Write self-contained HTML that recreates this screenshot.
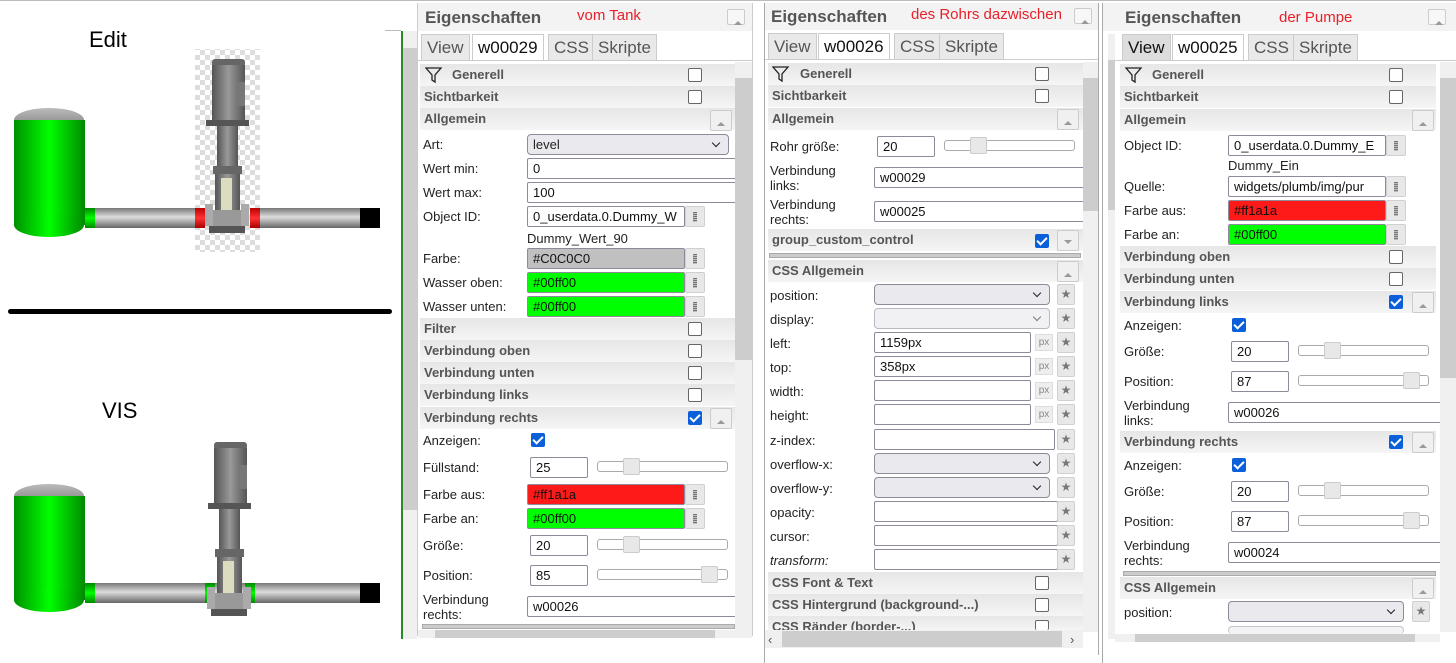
<!DOCTYPE html>
<html><head><meta charset="utf-8"><style>
*{box-sizing:border-box;margin:0;padding:0}
body{width:1456px;height:663px;background:#fff;position:relative;overflow:hidden;font-family:"Liberation Sans",Arial,sans-serif;font-size:13px;color:#222}
div,span{position:absolute}
.l{white-space:nowrap;color:#222;line-height:15px}
.gh{height:22px;background:linear-gradient(#e6e6e6,#f5f5f5);font-weight:bold;color:#555;line-height:22px;padding-left:4px;white-space:nowrap}
.in{height:21px;border:1px solid #8e8a9a;border-radius:2px;background:#fff;line-height:19px;padding-left:5px;white-space:nowrap;overflow:hidden;color:#111}
.sel{height:21px;border:1px solid #8e8a9a;border-radius:4px;background:#e9e9ee;line-height:19px;padding-left:5px}
.sel:after{content:"";position:absolute;right:9px;top:5px;width:5px;height:5px;border-right:1.5px solid #222;border-bottom:1.5px solid #222;transform:rotate(45deg)}
.btn{width:20px;height:21px;background:#e8e8e8;border:1px solid #d0d0d0;border-radius:2px}
.btn:after{content:"";position:absolute;left:7px;top:5px;width:4px;height:10px;background:repeating-linear-gradient(#777 0 1px,#bbb 1px 2px)}
.up{width:22px;height:21px;background:#f0f0f0;border:1px solid #ccc;border-radius:2px}
.up:after{content:"";position:absolute;left:6px;top:7px;border:4px solid transparent;border-bottom:4px solid #999}
.dn:after{top:9px;border:4px solid transparent;border-top:4px solid #999}
.cb{width:14px;height:14px;border:1.5px solid #666;border-radius:2px;background:#fff}
.ck{width:14px;height:14px;background:#0b5fd8;border-radius:2px}
.ck:after{content:"";position:absolute;left:4px;top:1px;width:4px;height:8px;border-right:2px solid #fff;border-bottom:2px solid #fff;transform:rotate(45deg)}
.sl{height:11px;border:1px solid #aaa;border-radius:3px;background:#fff}
.th{width:17px;height:17px;top:-4px;background:#e8e8e8;border:1px solid #ccc;border-radius:2px}
.star{width:18px;height:21px;background:#e8e8e8;border:1px solid #d0d0d0;border-radius:2px;color:#777;font-size:12px;text-align:center;line-height:19px}
.px{width:18px;height:17px;background:#eee;border:1px solid #ddd;font-size:10px;color:#888;text-align:center;line-height:15px}
.tab{height:26px;border:1px solid #ccc;border-bottom:none;background:#e9e9e9;font-size:17px;color:#555;line-height:26px;padding:0 5px}
.tab.a{background:#fff;color:#111}
.hd{font-size:17px;font-weight:bold;color:#555}
.red{color:#e8202a;font-size:15px}
.vs{background:#f0f0f0;z-index:5}
.vt{background:#cdcdcd;z-index:6}
</style></head><body>

<div style="left:0;top:0;width:1456px;height:1px;background:#bbb"></div>

<div style="left:89px;top:27px;font-size:22px;color:#000">Edit</div>
<div style="left:102px;top:398px;font-size:22px;color:#000">VIS</div>
<div style="left:8px;top:309px;width:384px;height:5px;background:#000;border-radius:3px"></div>

<svg style="position:absolute;left:0;top:0" width="400" height="663">
<defs>
<linearGradient id="tg" x1="0" x2="1"><stop offset="0" stop-color="#009000"/><stop offset=".5" stop-color="#00ff00"/><stop offset="1" stop-color="#008a00"/></linearGradient>
<linearGradient id="pg" x1="0" y1="0" x2="0" y2="1"><stop offset="0" stop-color="#777"/><stop offset=".45" stop-color="#ddd"/><stop offset="1" stop-color="#666"/></linearGradient>
<linearGradient id="mg" x1="0" x2="1"><stop offset="0" stop-color="#555"/><stop offset=".5" stop-color="#999"/><stop offset="1" stop-color="#555"/></linearGradient>
<linearGradient id="dg" x1="0" y1="0" x2="0" y2="1"><stop offset="0" stop-color="#bbb"/><stop offset="1" stop-color="#777"/></linearGradient>
<linearGradient id="rg" x1="0" y1="0" x2="0" y2="1"><stop offset="0" stop-color="#b00"/><stop offset=".5" stop-color="#f33"/><stop offset="1" stop-color="#a00"/></linearGradient>
<linearGradient id="gg" x1="0" y1="0" x2="0" y2="1"><stop offset="0" stop-color="#080"/><stop offset=".5" stop-color="#0f0"/><stop offset="1" stop-color="#080"/></linearGradient>
<pattern id="chk" width="10" height="10" patternUnits="userSpaceOnUse"><rect width="10" height="10" fill="#fff"/><rect width="5" height="5" fill="#ddd"/><rect x="5" y="5" width="5" height="5" fill="#ddd"/></pattern>
<g id="pump">
<rect x="17" y="9" width="33" height="8" rx="3" fill="#666"/>
<rect x="17" y="15" width="33" height="56" fill="url(#mg)"/>
<rect x="42" y="32" width="8" height="24" fill="#777"/>
<rect x="11" y="70" width="43" height="6" fill="#555"/>
<rect x="22" y="76" width="21" height="40" fill="url(#mg)"/>
<rect x="18" y="116" width="29" height="8" fill="#666"/>
<rect x="20" y="124" width="25" height="45" fill="url(#mg)"/>
<rect x="26" y="128" width="11" height="40" fill="#dcdcc0"/>
<rect x="10" y="154" width="8" height="22" fill="#aaa"/>
<rect x="46" y="154" width="8" height="22" fill="#aaa"/>
<rect x="18" y="160" width="28" height="16" fill="#999"/>
<rect x="14" y="176" width="36" height="7" fill="#555"/>
</g>
</defs>
<ellipse cx="49" cy="120" rx="35" ry="12" fill="url(#dg)"/>
<rect x="14" y="120" width="71" height="105" fill="url(#tg)"/>
<ellipse cx="49" cy="225" rx="35" ry="12" fill="url(#tg)"/>
<rect x="85" y="208" width="10" height="20" fill="url(#gg)"/>
<rect x="95" y="208" width="265" height="20" fill="url(#pg)"/>
<rect x="360" y="208" width="20" height="20" fill="#000"/>
<rect x="195" y="49" width="65" height="203" fill="url(#chk)"/>
<rect x="195" y="208" width="10" height="20" fill="url(#rg)"/>
<rect x="250" y="208" width="10" height="20" fill="url(#rg)"/>
<use href="#pump" x="195" y="50"/>
<ellipse cx="49" cy="496" rx="35" ry="12" fill="url(#dg)"/>
<rect x="14" y="496" width="71" height="104" fill="url(#tg)"/>
<ellipse cx="49" cy="600" rx="35" ry="12" fill="url(#tg)"/>
<rect x="85" y="583" width="10" height="20" fill="url(#gg)"/>
<rect x="95" y="583" width="265" height="20" fill="url(#pg)"/>
<rect x="360" y="583" width="20" height="20" fill="#000"/>
<rect x="205" y="583" width="10" height="20" fill="url(#gg)"/>
<rect x="245" y="583" width="10" height="20" fill="url(#gg)"/>
<use href="#pump" x="197" y="433"/>
</svg>

<!-- PANEL 1 -->
<div style="left:385px;top:30px;width:16px;height:1px;background:#bbb"></div>
<div style="left:401px;top:31px;width:2px;height:608px;background:#2a8a2a"></div>
<div style="left:403px;top:31px;width:14px;height:608px;background:#f0f0f0"></div>
<div style="left:403px;top:48px;width:14px;height:462px;background:#cdcdcd"></div>
<div style="left:417px;top:3px;width:1px;height:633px;background:#ccc"></div>
<div style="left:752px;top:3px;width:1px;height:633px;background:#ccc"></div>
<div style="left:418px;top:3px;width:334px;height:28px;background:#f3f3f3"></div>
<div class="hd" style="left:425px;top:8px">Eigenschaften</div>
<div class="red" style="left:577px;top:7px">vom Tank</div>
<div class="up" style="left:727px;top:9px;width:18px;height:16px;background:#f7f7f7"></div>
<div class="tab" style="left:421px;top:34px">View</div>
<div class="tab a" style="left:472px;top:34px">w00029</div>
<div class="tab" style="left:548px;top:34px">CSS</div>
<div class="tab" style="left:592px;top:34px">Skripte</div>
<div style="left:418px;top:60px;width:334px;height:1px;background:#ccc"></div>
<div class="vs" style="left:735px;top:62px;width:17px;height:570px"></div>
<div class="vt" style="left:735px;top:78px;width:17px;height:282px"></div>
<div class="gh" style="left:420px;top:64px;width:315px;padding-left:32px">Generell</div>
<svg style="position:absolute;left:425px;top:66px" width="18" height="18"><path d="M1 2h15l-6 7v7l-3-2v-5z" fill="none" stroke="#222" stroke-width="1.3"/></svg>
<div class="cb" style="left:688px;top:68px"></div>
<div class="gh" style="left:420px;top:86px;width:315px">Sichtbarkeit</div>
<div class="cb" style="left:688px;top:90px"></div>
<div class="gh" style="left:420px;top:108px;width:315px">Allgemein</div>
<div class="up" style="left:710px;top:110px"></div>
<div class="l" style="left:423px;top:137px">Art:</div><div class="sel" style="left:527px;top:134px;width:202px">level</div>
<div class="l" style="left:423px;top:161px">Wert min:</div><div class="in" style="left:527px;top:158px;width:215px">0</div>
<div class="l" style="left:423px;top:185px">Wert max:</div><div class="in" style="left:527px;top:182px;width:215px">100</div>
<div class="l" style="left:423px;top:209px">Object ID:</div><div class="in" style="left:527px;top:206px;width:158px">0_userdata.0.Dummy_W</div><div class="btn" style="left:685px;top:206px"></div>
<div class="l" style="left:527px;top:231px">Dummy_Wert_90</div>
<div class="l" style="left:423px;top:251px">Farbe:</div><div class="in" style="left:527px;top:248px;width:158px;background:#c0c0c0">#C0C0C0</div><div class="btn" style="left:685px;top:248px"></div>
<div class="l" style="left:423px;top:275px">Wasser oben:</div><div class="in" style="left:527px;top:272px;width:158px;background:#00ff00">#00ff00</div><div class="btn" style="left:685px;top:272px"></div>
<div class="l" style="left:423px;top:299px">Wasser unten:</div><div class="in" style="left:527px;top:296px;width:158px;background:#00ff00">#00ff00</div><div class="btn" style="left:685px;top:296px"></div>
<div class="gh" style="left:420px;top:318px;width:315px">Filter</div><div class="cb" style="left:688px;top:322px"></div>
<div class="gh" style="left:420px;top:340px;width:315px">Verbindung oben</div><div class="cb" style="left:688px;top:344px"></div>
<div class="gh" style="left:420px;top:362px;width:315px">Verbindung unten</div><div class="cb" style="left:688px;top:366px"></div>
<div class="gh" style="left:420px;top:384px;width:315px">Verbindung links</div><div class="cb" style="left:688px;top:388px"></div>
<div class="gh" style="left:420px;top:407px;width:315px">Verbindung rechts</div><div class="ck" style="left:688px;top:411px"></div><div class="up" style="left:710px;top:408px"></div>
<div class="l" style="left:423px;top:433px">Anzeigen:</div><div class="ck" style="left:531px;top:433px"></div>
<div class="l" style="left:423px;top:460px">Füllstand:</div><div class="in" style="left:530px;top:457px;width:58px">25</div><div class="sl" style="left:597px;top:461px;width:131px"><div class="th" style="left:25px"></div></div>
<div class="l" style="left:423px;top:487px">Farbe aus:</div><div class="in" style="left:527px;top:484px;width:158px;background:#ff1a1a">#ff1a1a</div><div class="btn" style="left:685px;top:484px"></div>
<div class="l" style="left:423px;top:511px">Farbe an:</div><div class="in" style="left:527px;top:508px;width:158px;background:#00ff00">#00ff00</div><div class="btn" style="left:685px;top:508px"></div>
<div class="l" style="left:423px;top:538px">Größe:</div><div class="in" style="left:530px;top:535px;width:58px">20</div><div class="sl" style="left:597px;top:539px;width:131px"><div class="th" style="left:25px"></div></div>
<div class="l" style="left:423px;top:568px">Position:</div><div class="in" style="left:530px;top:565px;width:58px">85</div><div class="sl" style="left:597px;top:569px;width:131px"><div class="th" style="left:103px"></div></div>
<div class="l" style="left:423px;top:592px">Verbindung<br>rechts:</div><div class="in" style="left:527px;top:596px;width:215px">w00026</div>
<div style="left:422px;top:624px;width:313px;height:5px;background:#ccc;border:1px solid #aaa"></div>
<div style="left:418px;top:630px;width:334px;height:8px;background:#f0f0f0"></div>
<div style="left:435px;top:630px;width:280px;height:8px;background:#cdcdcd"></div>

<!-- PANEL 2 -->
<div style="left:764px;top:3px;width:1px;height:660px;background:#aaa"></div>
<div style="left:1098px;top:3px;width:1px;height:652px;background:#aaa"></div>
<div style="left:765px;top:3px;width:333px;height:27px;background:#f3f3f3"></div>
<div class="hd" style="left:771px;top:7px">Eigenschaften</div>
<div class="red" style="left:911px;top:6px">des Rohrs dazwischen</div>
<div class="up" style="left:1074px;top:8px;width:18px;height:16px;background:#f7f7f7"></div>
<div class="tab" style="left:768px;top:33px">View</div>
<div class="tab a" style="left:818px;top:33px">w00026</div>
<div class="tab" style="left:894px;top:33px">CSS</div>
<div class="tab" style="left:939px;top:33px">Skripte</div>
<div style="left:765px;top:59px;width:333px;height:1px;background:#ccc"></div>
<div class="vs" style="left:1083px;top:62px;width:15px;height:570px"></div>
<div class="vt" style="left:1083px;top:78px;width:15px;height:133px"></div>
<div class="gh" style="left:768px;top:63px;width:315px;padding-left:32px">Generell</div>
<svg style="position:absolute;left:772px;top:65px" width="18" height="18"><path d="M1 2h15l-6 7v7l-3-2v-5z" fill="none" stroke="#222" stroke-width="1.3"/></svg>
<div class="cb" style="left:1035px;top:67px"></div>
<div class="gh" style="left:768px;top:85px;width:315px">Sichtbarkeit</div><div class="cb" style="left:1035px;top:89px"></div>
<div class="gh" style="left:768px;top:108px;width:315px">Allgemein</div><div class="up" style="left:1057px;top:109px"></div>
<div class="l" style="left:770px;top:139px">Rohr größe:</div><div class="in" style="left:877px;top:136px;width:58px">20</div><div class="sl" style="left:944px;top:140px;width:131px"><div class="th" style="left:25px"></div></div>
<div class="l" style="left:770px;top:163px">Verbindung<br>links:</div><div class="in" style="left:874px;top:167px;width:212px">w00029</div>
<div class="l" style="left:770px;top:197px">Verbindung<br>rechts:</div><div class="in" style="left:874px;top:201px;width:212px">w00025</div>
<div class="gh" style="left:768px;top:229px;width:315px">group_custom_control</div><div class="ck" style="left:1035px;top:234px"></div><div class="up dn" style="left:1057px;top:230px"></div>
<div style="left:769px;top:253px;width:312px;height:5px;background:#ccc;border:1px solid #aaa"></div>
<div class="gh" style="left:768px;top:260px;width:315px">CSS Allgemein</div><div class="up" style="left:1057px;top:261px"></div>
<div class="l" style="left:770px;top:288px">position:</div><div class="sel" style="left:874px;top:284px;width:176px"></div><div class="star" style="left:1057px;top:284px">★</div>
<div class="l" style="left:770px;top:312px">display:</div><div class="sel" style="left:874px;top:308px;width:176px;opacity:.6"></div><div class="star" style="left:1057px;top:308px">★</div>
<div class="l" style="left:770px;top:336px">left:</div><div class="in" style="left:874px;top:332px;width:157px">1159px</div><div class="px" style="left:1035px;top:334px">px</div><div class="star" style="left:1057px;top:332px">★</div>
<div class="l" style="left:770px;top:360px">top:</div><div class="in" style="left:874px;top:356px;width:157px">358px</div><div class="px" style="left:1035px;top:358px">px</div><div class="star" style="left:1057px;top:356px">★</div>
<div class="l" style="left:770px;top:384px">width:</div><div class="in" style="left:874px;top:380px;width:157px"></div><div class="px" style="left:1035px;top:382px">px</div><div class="star" style="left:1057px;top:380px">★</div>
<div class="l" style="left:770px;top:408px">height:</div><div class="in" style="left:874px;top:404px;width:157px"></div><div class="px" style="left:1035px;top:406px">px</div><div class="star" style="left:1057px;top:404px">★</div>
<div class="l" style="left:770px;top:433px">z-index:</div><div class="in" style="left:874px;top:429px;width:181px"></div><div class="star" style="left:1057px;top:429px">★</div>
<div class="l" style="left:770px;top:457px">overflow-x:</div><div class="sel" style="left:874px;top:453px;width:176px"></div><div class="star" style="left:1057px;top:453px">★</div>
<div class="l" style="left:770px;top:481px">overflow-y:</div><div class="sel" style="left:874px;top:477px;width:176px"></div><div class="star" style="left:1057px;top:477px">★</div>
<div class="l" style="left:770px;top:505px">opacity:</div><div class="in" style="left:874px;top:501px;width:184px"></div><div class="star" style="left:1057px;top:501px">★</div>
<div class="l" style="left:770px;top:529px">cursor:</div><div class="in" style="left:874px;top:525px;width:184px"></div><div class="star" style="left:1057px;top:525px">★</div>
<div class="l" style="left:770px;top:553px;font-style:italic">transform:</div><div class="in" style="left:874px;top:549px;width:184px"></div><div class="star" style="left:1057px;top:549px">★</div>
<div class="gh" style="left:768px;top:572px;width:315px">CSS Font &amp; Text</div><div class="cb" style="left:1035px;top:576px"></div>
<div class="gh" style="left:768px;top:594px;width:315px">CSS Hintergrund (background-...)</div><div class="cb" style="left:1035px;top:598px"></div>
<div class="gh" style="left:768px;top:616px;width:315px;height:14px;overflow:hidden">CSS Ränder (border-...)</div><div class="cb" style="left:1035px;top:620px;height:10px;border-bottom:none"></div>
<div style="left:765px;top:630px;width:318px;height:18px;background:#f0f0f0"></div>
<div style="left:782px;top:631px;width:280px;height:16px;background:#cdcdcd"></div>
<div class="l" style="left:768px;top:632px;color:#555">‹</div><div class="l" style="left:1070px;top:632px;color:#555">›</div>

<!-- PANEL 3 -->
<div style="left:1102px;top:3px;width:1px;height:660px;background:#aaa"></div>
<div style="left:1103px;top:3px;width:353px;height:28px;background:#f3f3f3"></div>
<div class="hd" style="left:1125px;top:8px">Eigenschaften</div>
<div class="red" style="left:1279px;top:9px">der Pumpe</div>
<div class="up" style="left:1428px;top:9px;width:18px;height:16px;background:#f7f7f7"></div>
<div style="left:1108px;top:34px;width:7px;height:605px;background:#f0f0f0"></div>
<div style="left:1108px;top:60px;width:7px;height:150px;background:#cdcdcd"></div>
<div class="tab" style="left:1122px;top:34px;background:#ddd;color:#111">View</div>
<div class="tab a" style="left:1172px;top:34px">w00025</div>
<div class="tab" style="left:1248px;top:34px">CSS</div>
<div class="tab" style="left:1293px;top:34px">Skripte</div>
<div style="left:1115px;top:60px;width:341px;height:1px;background:#ccc"></div>
<div class="vs" style="left:1440px;top:62px;width:16px;height:570px"></div>
<div class="vt" style="left:1440px;top:78px;width:16px;height:300px"></div>
<div class="gh" style="left:1120px;top:64px;width:316px;padding-left:32px">Generell</div>
<svg style="position:absolute;left:1125px;top:66px" width="18" height="18"><path d="M1 2h15l-6 7v7l-3-2v-5z" fill="none" stroke="#222" stroke-width="1.3"/></svg>
<div class="cb" style="left:1389px;top:68px"></div>
<div class="gh" style="left:1120px;top:86px;width:316px">Sichtbarkeit</div><div class="cb" style="left:1389px;top:90px"></div>
<div class="gh" style="left:1120px;top:109px;width:316px">Allgemein</div><div class="up" style="left:1412px;top:110px"></div>
<div class="l" style="left:1124px;top:138px">Object ID:</div><div class="in" style="left:1228px;top:135px;width:158px">0_userdata.0.Dummy_E</div><div class="btn" style="left:1386px;top:135px"></div>
<div class="l" style="left:1228px;top:158px">Dummy_Ein</div>
<div class="l" style="left:1124px;top:179px">Quelle:</div><div class="in" style="left:1228px;top:176px;width:158px">widgets/plumb/img/pur</div><div class="btn" style="left:1386px;top:176px"></div>
<div class="l" style="left:1124px;top:203px">Farbe aus:</div><div class="in" style="left:1228px;top:200px;width:158px;background:#ff1a1a">#ff1a1a</div><div class="btn" style="left:1386px;top:200px"></div>
<div class="l" style="left:1124px;top:227px">Farbe an:</div><div class="in" style="left:1228px;top:224px;width:158px;background:#00ff00">#00ff00</div><div class="btn" style="left:1386px;top:224px"></div>
<div class="gh" style="left:1120px;top:246px;width:316px">Verbindung oben</div><div class="cb" style="left:1389px;top:250px"></div>
<div class="gh" style="left:1120px;top:268px;width:316px">Verbindung unten</div><div class="cb" style="left:1389px;top:272px"></div>
<div class="gh" style="left:1120px;top:291px;width:316px">Verbindung links</div><div class="ck" style="left:1389px;top:295px"></div><div class="up" style="left:1412px;top:292px"></div>
<div class="l" style="left:1124px;top:318px">Anzeigen:</div><div class="ck" style="left:1232px;top:318px"></div>
<div class="l" style="left:1124px;top:344px">Größe:</div><div class="in" style="left:1231px;top:341px;width:58px">20</div><div class="sl" style="left:1298px;top:345px;width:131px"><div class="th" style="left:25px"></div></div>
<div class="l" style="left:1124px;top:374px">Position:</div><div class="in" style="left:1231px;top:371px;width:58px">87</div><div class="sl" style="left:1298px;top:375px;width:131px"><div class="th" style="left:104px"></div></div>
<div class="l" style="left:1124px;top:398px">Verbindung<br>links:</div><div class="in" style="left:1228px;top:402px;width:215px">w00026</div>
<div class="gh" style="left:1120px;top:431px;width:316px">Verbindung rechts</div><div class="ck" style="left:1389px;top:435px"></div><div class="up" style="left:1412px;top:432px"></div>
<div class="l" style="left:1124px;top:458px">Anzeigen:</div><div class="ck" style="left:1232px;top:458px"></div>
<div class="l" style="left:1124px;top:484px">Größe:</div><div class="in" style="left:1231px;top:481px;width:58px">20</div><div class="sl" style="left:1298px;top:485px;width:131px"><div class="th" style="left:25px"></div></div>
<div class="l" style="left:1124px;top:514px">Position:</div><div class="in" style="left:1231px;top:511px;width:58px">87</div><div class="sl" style="left:1298px;top:515px;width:131px"><div class="th" style="left:104px"></div></div>
<div class="l" style="left:1124px;top:538px">Verbindung<br>rechts:</div><div class="in" style="left:1228px;top:542px;width:215px">w00024</div>
<div style="left:1123px;top:571px;width:313px;height:5px;background:#ccc;border:1px solid #aaa"></div>
<div class="gh" style="left:1120px;top:577px;width:316px">CSS Allgemein</div><div class="up" style="left:1412px;top:578px"></div>
<div class="l" style="left:1124px;top:605px">position:</div><div class="sel" style="left:1228px;top:601px;width:176px"></div><div class="star" style="left:1412px;top:601px">★</div>
<div class="sel" style="left:1228px;top:626px;width:176px;height:8px;border-bottom:none;opacity:.5"></div>
<div style="left:1115px;top:634px;width:325px;height:8px;background:#f0f0f0"></div>
<div style="left:1135px;top:634px;width:280px;height:8px;background:#cdcdcd"></div>
</body></html>
